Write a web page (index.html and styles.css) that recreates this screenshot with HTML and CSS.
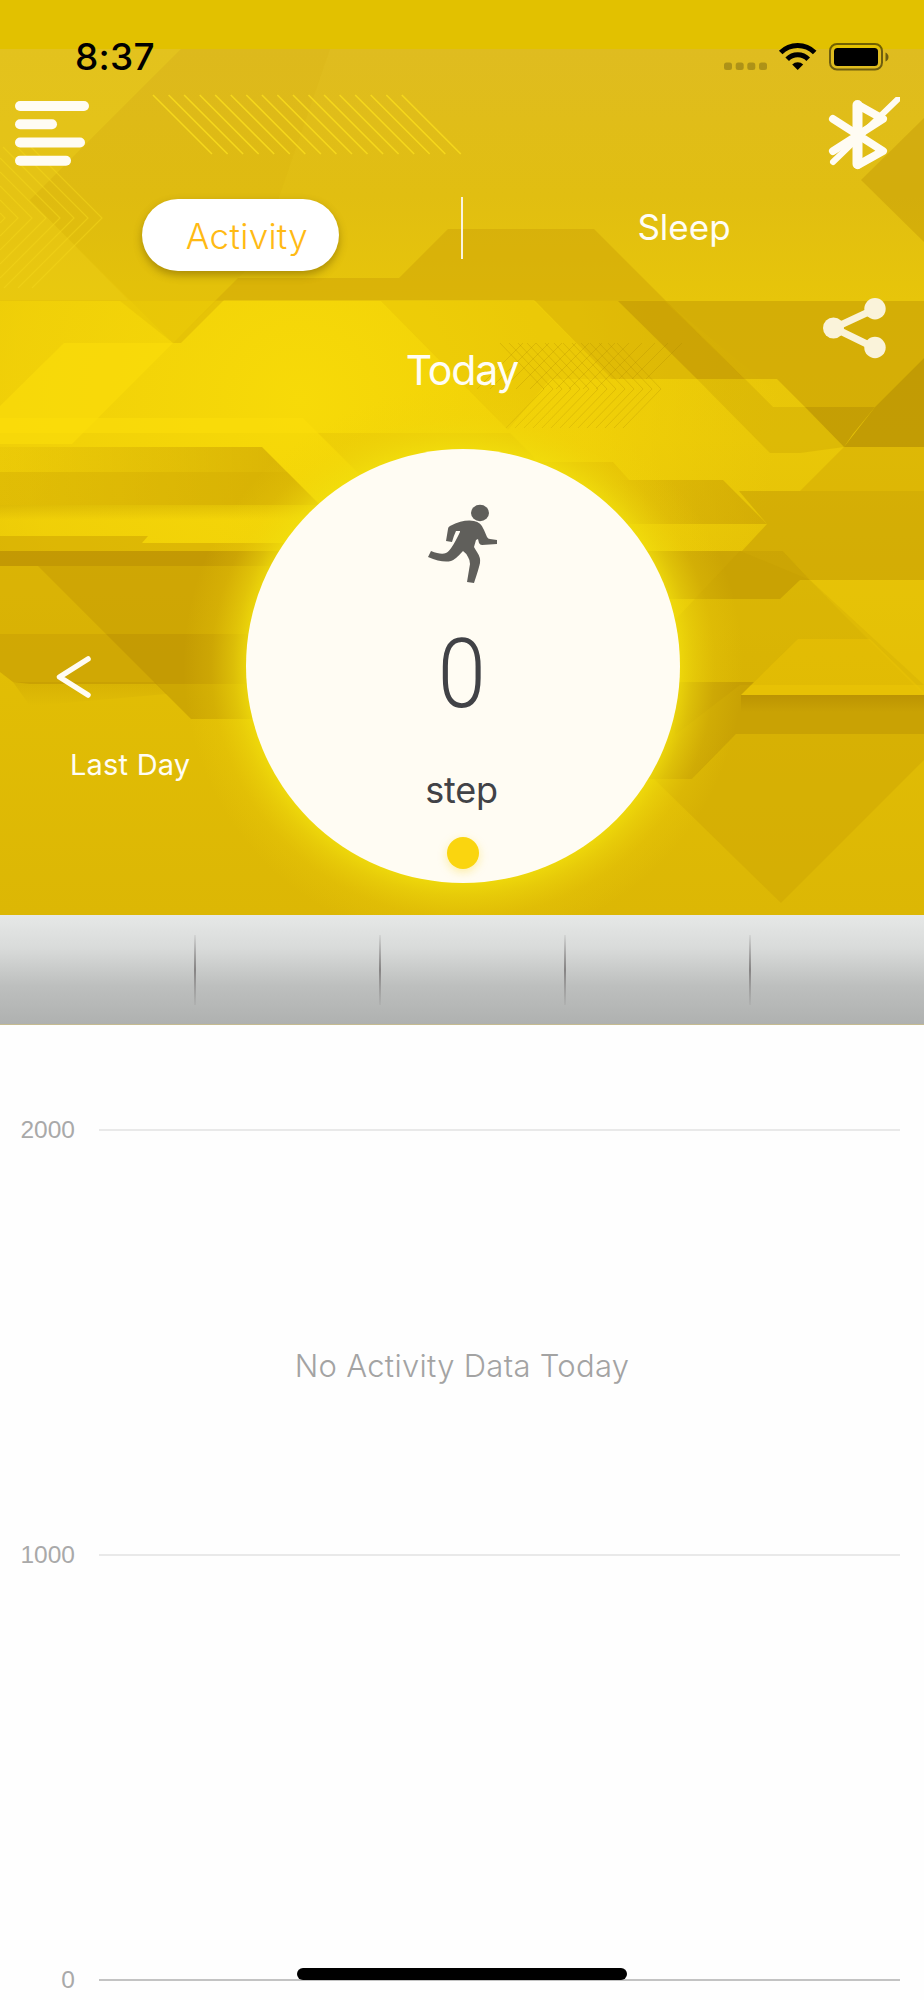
FILE: index.html
```html
<!DOCTYPE html>
<html lang="en">
<head>
    <meta charset="UTF-8">
    <meta name="viewport" content="width=device-width, initial-scale=1.0">
    <title>Activity</title>
    <link rel="stylesheet" href="styles.css">
</head>
<body>

    <section class="hero">
        <svg class="hero-bg" viewBox="0 0 924 915" aria-hidden="true">
            <defs>
                <linearGradient id="base" x1="0" y1="49" x2="0" y2="915" gradientUnits="userSpaceOnUse">
                    <stop offset="0" stop-color="#dfbc20"/>
                    <stop offset=".17" stop-color="#e1be11"/>
                    <stop offset=".29" stop-color="#e7c50a"/>
                    <stop offset=".45" stop-color="#e9c708"/>
                    <stop offset=".7" stop-color="#e2be05"/>
                    <stop offset="1" stop-color="#dcb705"/>
                </linearGradient>
                <radialGradient id="light" cx="300" cy="400" r="480" gradientUnits="userSpaceOnUse">
                    <stop offset="0" stop-color="#f7da08"/>
                    <stop offset=".6" stop-color="#f3d308" stop-opacity=".75"/>
                    <stop offset="1" stop-color="#f0d006" stop-opacity="0"/>
                </radialGradient>
                <linearGradient id="shade" x1="0" y1="0" x2="1" y2="0">
                    <stop offset="0" stop-color="#c89e04" stop-opacity=".1"/>
                    <stop offset="1" stop-color="#c89e04" stop-opacity=".6"/>
                </linearGradient>
                <linearGradient id="fade" x1="0" y1="0" x2="0" y2="1">
                    <stop offset="0" stop-color="#a87f00" stop-opacity=".4"/>
                    <stop offset="1" stop-color="#a87f00" stop-opacity="0"/>
                </linearGradient>
                <radialGradient id="glow" cx="463" cy="666" r="280" gradientUnits="userSpaceOnUse">
                    <stop offset=".76" stop-color="#f2df0c" stop-opacity=".9"/>
                    <stop offset=".82" stop-color="#f0db0c" stop-opacity=".55"/>
                    <stop offset=".9" stop-color="#efd40a" stop-opacity=".2"/>
                    <stop offset="1" stop-color="#efd40a" stop-opacity="0"/>
                </radialGradient>
            </defs>

            <rect width="924" height="915" fill="url(#base)"/>
            <path d="M0 301H665L844 447L767 524L740 551H0Z" fill="url(#light)"/>

            <!-- top -->
            <path d="M0 49H181L30 200L128 300H0Z" fill="#efd01c" opacity=".3"/>
            <path d="M181 49L30 200L173 343L258 258L330 49Z" fill="#cda407" opacity=".1"/>
            <path d="M924 118L861 180L924 242Z" fill="#b98e04" opacity=".35"/>
            <path d="M216 300L238 278H399L448 229H594L665 300Z" fill="#c89c05" opacity=".4"/>
            <path d="M173 343L216 300H224L181 343Z" fill="#c89c05" opacity=".3"/>
            <path d="M380 300H534L612 379H745L665 300Z" fill="#cea304" opacity=".45"/>
            <path d="M0 406L64 343H173L72 444H0Z" fill="#fbdd0a" opacity=".6"/>
            <path d="M120 301L173 343L216 301Z" fill="#dcb505" opacity=".3"/>
            <path d="M381 301L508 430L550 379H612L534 301Z" fill="#dcb405" opacity=".25"/>

            <!-- right side -->
            <path d="M618 301H665L745 379H697Z" fill="#bb9003" opacity=".5"/>
            <path d="M665 301H924V358L875 407H805L777 379H745Z" fill="#c59a04" opacity=".55"/>
            <path d="M697 379H745L773 407H805L844 447L800 453H770Z" fill="#c59a04" opacity=".3"/>
            <path d="M805 407H875L853 434L844 447Z" fill="#a87e02" opacity=".55"/>
            <path d="M924 358L875 407L844 447H924Z" fill="#a87e02" opacity=".6"/>
            <path d="M844 447H924V491H800Z" fill="#d0a704" opacity=".45"/>
            <path d="M739 491H924V580H810L783 551H742L767 524Z" fill="#bf9504" opacity=".45"/>
            <path d="M462 462H613L629 480H462Z" fill="#dcb405" opacity=".45"/>
            <path d="M500 480H723L767 524H500Z" fill="url(#shade)"/>
            <path d="M640 551H783L810 580H800L780 599H640Z" fill="#b88e04" opacity=".55"/>
            <path d="M740 551L675 620V735L740 685H924L810 580Z" fill="#c39904" opacity=".28"/>
            <path d="M810 580H924V695L842 613Z" fill="#eac60a" opacity=".3"/>
            <path d="M670 682H754L741 695H924V734H736L692 779H640Z" fill="#b18803" opacity=".5"/>
            <path d="M741 695H924V712H741Z" fill="url(#fade)"/>
            <path d="M741 695L798 639H870L924 692V695Z" fill="#efc906" opacity=".4"/>
            <path d="M654 779H692L736 734H924V760L781 903Z" fill="#cda304" opacity=".45"/>

            <!-- left side -->
            <path d="M0 418H303L318 433H0Z" fill="#fcde0a" opacity=".6"/>
            <path d="M318 433H510L532 455L560 505H390Z" fill="#d7af05" opacity=".25"/>
            <path d="M0 447H262L287 472H0Z" fill="url(#shade)"/>
            <path d="M0 472H287L320 505H0Z" fill="url(#shade)"/>
            <path d="M0 472H287L320 505H0Z" fill="#cfa504" opacity=".35"/>
            <path d="M0 505H320V520H0Z" fill="url(#fade)" opacity=".6"/>
            <path d="M0 536H148L142 543H300V551H0Z" fill="#d0a704" opacity=".6"/>
            <path d="M0 551H300V566H0Z" fill="#bd9203" opacity=".85"/>
            <path d="M0 566H300V634H0Z" fill="#d0a604" opacity=".5"/>
            <path d="M38 566H300V634H106Z" fill="#bd9303" opacity=".4"/>
            <path d="M0 634H300V684H30L13 682L0 672Z" fill="#c49a03" opacity=".6"/>
            <path d="M106 634H300V719H191Z" fill="#b68b02" opacity=".45"/>
            <path d="M13 682H155L167 694L30 706Z" fill="url(#fade)" opacity=".45"/>

            <rect x="0" y="0" width="924" height="49" fill="#e2c100"/>

            <!-- hatching -->
            <g class="hatch-bright">
                <path d="M153 95l59 59M168.600 95l59 59M184.100 95l59 59M199.700 95l59 59M215.200 95l59 59M230.800 95l59 59M246.300 95l59 59M261.900 95l59 59M277.400 95l59 59M293 95l59 59M308.500 95l59 59M324.100 95l59 59M339.600 95l59 59M355.200 95l59 59M370.700 95l59 59M386.300 95l59 59M401.800 95l59 59"/>
            </g>
            <g class="hatch-soft">
                <path d="M31 147l71 71l-70 70M17 147l71 71l-70 70M3 147l71 71l-70 70M0 158l60 60l-60 60M0 172l46 46l-46 46M0 186l32 32l-32 32M0 200l18 18l-18 18M0 213l5 5l-5 5"/>
            </g>
            <g class="hatch-dark">
                <path d="M682 343l-36 36M668 343l-36 36M655 343l-36 36M642 343l-46 46M629 343l-46 46M615 343l-46 46M602 343l-46 46M589 343l-46 46M576 343l-46 46M562 343l-46 46M549 343l-46 46M536 343l-46 46M523 343l-46 46"/>
                <path d="M617 343l44 46l-38 39M608 343l44 46l-38 39M599 343l44 46l-38 39M590 343l44 46l-38 39M581 343l44 46l-38 39M572 343l44 46l-38 39M563 343l44 46l-38 39M554 343l44 46l-38 39M545 343l44 46l-38 39M536 343l44 46l-38 39M527 343l44 46l-38 39M518 343l44 46l-38 39M509 343l44 46l-38 39M500 343l44 46l-38 39"/>
            </g>
            <rect y="49" width="924" height="866" fill="url(#glow)"/>
        </svg>

        <div class="status-bar">
            <span class="time">8:37</span>
            <svg class="status-icons" width="168" height="30" viewBox="0 0 168 30">
                <g fill="#000" opacity=".22">
                    <rect x="2" y="20.500" width="8" height="7.500" rx="2.500"/>
                    <rect x="13.700" y="20.500" width="8" height="7.500" rx="2.500"/>
                    <rect x="25.300" y="20.500" width="8" height="7.500" rx="2.500"/>
                    <rect x="37" y="20.500" width="8" height="7.500" rx="2.500"/>
                </g>
                <g fill="none" stroke="#000" stroke-width="5">
                    <path d="M58.700 10.500a24 24 0 0 1 34 0"/>
                    <path d="M65.200 17.200a14.500 14.500 0 0 1 21 0"/>
                </g>
                <path d="M75.700 28l-5.500-5.600a7.800 7.800 0 0 1 11 0Z"/>
                <rect x="108" y="2" width="52" height="25.500" rx="7" fill="none" stroke="#000" stroke-opacity=".5" stroke-width="2"/>
                <rect x="112" y="6" width="44" height="18" rx="3.500"/>
                <path d="M163.500 10.500q3 1.500 3 4.500t-3 4.500Z" opacity=".5"/>
            </svg>
        </div>

        <div class="top-bar">
            <svg class="menu-icon" width="75" height="66" viewBox="0 0 75 66" fill="#fffcf3">
                <rect width="74" height="10" rx="5"/>
                <rect y="18.300" width="42" height="10" rx="5"/>
                <rect y="36.500" width="70" height="10" rx="5"/>
                <rect y="54.700" width="56" height="10" rx="5"/>
            </svg>
            <svg class="bluetooth-icon" width="74" height="76" viewBox="0 0 74 76" fill="none" stroke="#fffcf3" stroke-linecap="round" stroke-linejoin="round">
                <path d="M7 22L57 54L32 68V8L57 22L7 54" stroke-width="8"/>
                <path d="M31.500 8V67" stroke-width="10"/>
                <path d="M7 65L72 2" stroke-width="6"/>
            </svg>
        </div>

        <div class="tabs">
            <div class="tab-cell"><span class="tab active">Activity</span></div>
            <span class="tab-divider"></span>
            <div class="tab-cell"><span class="tab">Sleep</span></div>
        </div>

        <div class="day-row">
            <h1 class="day">Today</h1>
            <svg class="share-icon" width="64" height="62" viewBox="0 0 64 62" fill="#faf3da">
                <path d="M52 11L11 30L52 50" fill="none" stroke="#faf3da" stroke-width="7"/>
                <circle cx="10.500" cy="30" r="10.500"/>
                <circle cx="52" cy="10.700" r="10.700"/>
                <circle cx="52" cy="49.500" r="10.700"/>
            </svg>
        </div>

        <div class="progress">
            <div class="last-day">
                <svg class="chevron" width="36" height="44" viewBox="0 0 36 44" fill="none" stroke="#fffcf3" stroke-width="5.500" stroke-linecap="round" stroke-linejoin="round">
                    <path d="M32 4L3.500 22L32 40"/>
                </svg>
                <span>Last Day</span>
            </div>
            <div class="circle">
                <svg class="runner" width="70" height="80" viewBox="0 0 70 80" fill="#605f5b">
                    <ellipse cx="52" cy="9" rx="9" ry="8.200"/>
                    <path d="M22 22Q36 15 46 17Q53 18 56 26L59 33Q60 35 62 35L69 36V40L54 41Q52 41 51 39L50 35L48 36L46 43Q47 45 49 48Q53 54 52 59Q51 64 46 79L39 78L42 60Q42 56 40 53Q38 49 35 47Q27 56 23 57Q14 59 0 53L3 47Q13 51 18 49Q23 47 32 28L32 27L28 27Q26 31 24 38L18 37L20 25Q20 23 22 22Z"/>
                </svg>
                <span class="count">0</span>
                <span class="unit">step</span>
                <span class="dot"></span>
            </div>
        </div>
    </section>

    <div class="stats">
        <span></span>
        <span></span>
        <span></span>
        <span></span>
    </div>

    <section class="chart">
        <div class="grid-row"><span class="label">2000</span><span class="line"></span></div>
        <p class="empty">No Activity Data Today</p>
        <div class="grid-row"><span class="label">1000</span><span class="line"></span></div>
        <div class="grid-row axis"><span class="label">0</span><span class="line"></span></div>
        <div class="home-indicator"></div>
    </section>

</body>
</html>
```
FILE: styles.css
```css
* {
    box-sizing: border-box;
}
body {
    margin: 0;
    width: 924px;
    height: 2000px;
    overflow: hidden;
    background-color: #fefefe;
    font-family: Inter, "Liberation Sans", sans-serif;
}
svg {
    display: block;
}
.hero {
    position: relative;
    height: 915px;
    overflow: hidden;
    color: #fffdf5;
}
.hero-bg {
    position: absolute;
    top: 0;
    left: 0;
    width: 924px;
    height: 915px;
}
.hero > div {
    position: relative;
}
.hatch-bright path,
.hatch-soft path,
.hatch-dark path {
    fill: none;
    stroke: #f5d71c;
    stroke-width: 1.6;
}
.hatch-soft path {
    stroke: #f2d31a;
    stroke-width: 1.2;
    opacity: 0.6;
}
.hatch-dark path {
    stroke: #a98200;
    stroke-width: 1;
    opacity: 0.25;
}

/* status bar */
.status-bar {
    display: flex;
    justify-content: space-between;
    height: 97px;
    padding: 42px 34px 0 75px;
}
.time {
    font-size: 37px;
    font-weight: 500;
    line-height: 30px;
    letter-spacing: 0.3px;
    color: #000;
}

/* menu and bluetooth */
.top-bar {
    display: flex;
    justify-content: space-between;
    height: 100px;
    padding: 0 24px 0 15px;
}
.menu-icon {
    margin-top: 4px;
}

/* tabs */
.tabs {
    display: grid;
    grid-template-columns: 461px 2px 461px;
    height: 101px;
}
.tab-cell {
    display: flex;
    justify-content: center;
}
.tab {
    font-size: 35px;
    line-height: 60px;
    font-weight: 400;
}
.tab-cell:last-child .tab {
    padding-right: 19px;
}
.tab.active {
    width: 197px;
    height: 72px;
    margin: 2px 0 0 20px;
    padding-left: 13px;
    border-radius: 36px;
    background-color: #fff;
    box-shadow: 0 4px 8px rgba(100, 75, 0, 0.45);
    color: #ffba14;
    font-weight: 350;
    line-height: 75px;
    letter-spacing: 0.3px;
    text-align: center;
}
.tab-divider {
    width: 2px;
    height: 62px;
    background-color: #faf3e0;
}

/* current day */
.day-row {
    display: grid;
    grid-template-columns: 1fr auto 1fr;
    height: 151px;
}
.day {
    grid-column: 2;
    margin: 47px 0 0;
    font-size: 41px;
    font-weight: 400;
    line-height: 50px;
    letter-spacing: -1.2px;
}
.share-icon {
    justify-self: end;
    margin-right: 37px;
}

/* step counter */
.progress {
    display: flex;
}
.last-day {
    width: 246px;
    padding: 206px 0 0 56px;
    font-size: 29px;
    line-height: 36px;
}
.last-day span {
    display: block;
    margin: 48px 0 0 14px;
    letter-spacing: 0.2px;
}
.circle {
    display: flex;
    flex-direction: column;
    align-items: center;
    width: 434px;
    height: 434px;
    padding-top: 55px;
    border-radius: 50%;
    background-color: #fffcf3;
    color: #414246;
}
.count {
    height: 110px;
    margin: 35px 2px 0 0;
    font-family: Roboto, sans-serif;
    font-size: 96px;
    font-weight: 300;
    line-height: 110px;
    transform: scaleX(0.9);
}
.unit {
    height: 44px;
    margin: 39px 3px 0 0;
    font-size: 36px;
    font-weight: 400;
    line-height: 44px;
    letter-spacing: -0.2px;
}
.dot {
    width: 32px;
    height: 32px;
    margin-top: 25px;
    border-radius: 50%;
    background-color: #fad50f;
    box-shadow: 0 3px 10px rgba(250, 213, 15, 0.35);
}

/* grey stats strip */
.stats {
    display: flex;
    gap: 183px;
    height: 110px;
    padding: 20px 0 0 194px;
    background: linear-gradient(#e6e8e7, #d9dbda 30%, #bdbfbe 65%, #afb1b0);
    border-bottom: 1px solid #c5bb91;
}
.stats span {
    width: 2px;
    height: 70px;
    background: linear-gradient(rgba(120, 118, 118, 0.1), #868484 50%, rgba(120, 118, 118, 0.1));
}

/* chart */
.chart {
    position: relative;
    height: 975px;
    padding-top: 90px;
}
.grid-row {
    display: flex;
    align-items: center;
    height: 30px;
}
.label {
    width: 75px;
    margin-right: 24px;
    font-family: "Liberation Sans", sans-serif;
    font-size: 24.5px;
    color: #a9a9a9;
    text-align: right;
}
.line {
    width: 801px;
    height: 2px;
    background-color: #e9e9e9;
}
.empty {
    height: 40px;
    margin: 201px 0 154px;
    font-size: 31px;
    font-weight: 350;
    line-height: 40px;
    letter-spacing: 0.3px;
    color: #a3a3a3;
    text-align: center;
}
.axis {
    margin-top: 395px;
}
.axis .line {
    background-color: #c3c3c3;
}
.home-indicator {
    position: absolute;
    top: 943px;
    left: 297px;
    width: 330px;
    height: 12px;
    border-radius: 6px;
    background-color: #000;
}
```
